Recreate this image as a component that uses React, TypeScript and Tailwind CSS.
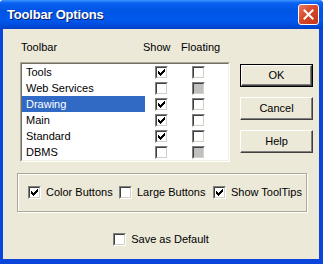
import React from "react";

const font = "font-['Liberation_Sans',Arial,sans-serif]";

function Check() {
  // classic 7x7 check mark, one column at a time
  const cols = [2, 3, 4, 3, 2, 1, 0];
  return (
    <svg width="7" height="7" viewBox="0 0 7 7" shapeRendering="crispEdges" className="block">
      {cols.map((y, x) => (
        <rect key={x} x={x} y={y} width="1" height="3" fill="#000" />
      ))}
    </svg>
  );
}

function CheckBox({ checked, disabled }: { checked?: boolean; disabled?: boolean }) {
  return (
    <span className="block w-[13px] h-[13px] shrink-0 border border-t-[#808080] border-l-[#808080] border-r-white border-b-white">
      <span
        className={`flex w-[11px] h-[11px] items-center justify-center border border-t-[#404040] border-l-[#404040] border-r-[#d4d0c8] border-b-[#d4d0c8] ${
          disabled ? "bg-[#c0c0c0]" : "bg-white"
        }`}
      >
        {checked && <Check />}
      </span>
    </span>
  );
}

function Button({ label, isDefault }: { label: string; isDefault?: boolean }) {
  return (
    <div
      className={`w-[73px] h-[23px] ${isDefault ? "border border-black" : ""}`}
    >
      <div className="h-full border border-t-white border-l-white border-r-[#404040] border-b-[#404040] bg-[#ece9d8] shadow-[inset_-1px_-1px_0_#808080] flex items-center justify-center text-[11px] text-black">
        {label}
      </div>
    </div>
  );
}

const toolbars = [
  { name: "Tools", show: true, floatDisabled: false },
  { name: "Web Services", show: false, floatDisabled: true },
  { name: "Drawing", show: true, floatDisabled: false, selected: true },
  { name: "Main", show: true, floatDisabled: false },
  { name: "Standard", show: true, floatDisabled: false },
  { name: "DBMS", show: false, floatDisabled: true },
];

export default function App() {
  return (
    <div className={`w-[323px] h-[264px] flex flex-col ${font} text-[11px] text-black overflow-hidden`}>
      {/* title bar */}
      <div className="h-[29px] shrink-0 flex items-center pl-[7px] pr-[4px] rounded-t-[3px] bg-[linear-gradient(to_bottom,#3d94ff_0%,#0a62f2_10%,#0055e5_35%,#0058ec_70%,#004ad8_90%,#003fc4_100%)]">
        <span className="text-white font-bold text-[13px] [text-shadow:1px_1px_0_#0a1e6a] tracking-[-0.2px]">
          Toolbar Options
        </span>
        <div className="ml-auto w-[21px] h-[21px] rounded-[3px] border border-white bg-[linear-gradient(135deg,#e8795a_0%,#d9482a_45%,#c2351a_100%)] flex items-center justify-center">
          <svg width="11" height="11" viewBox="0 0 11 11">
            <path d="M1.5 1.5 L9.5 9.5 M9.5 1.5 L1.5 9.5" stroke="#fff" strokeWidth="2" strokeLinecap="square" />
          </svg>
        </div>
      </div>

      {/* frame + body */}
      <div className="flex-1 flex bg-[#0a45dc] pl-[3px] pr-[4px] pb-[5px]">
        <div className="flex-1 bg-[#ece9d8] flex flex-col">
          <div className="flex pl-[17px] pt-[12px]">
            <div className="w-[210px]">
              <div className="flex h-[13px] leading-[13px]">
                <span className="w-[123px] pl-px">Toolbar</span>
                <span className="w-[38px]">Show</span>
                <span>Floating</span>
              </div>
              <div className="mt-[8px] h-[100px] border border-t-[#aca899] border-l-[#aca899] border-r-white border-b-white">
                <div className="h-full border border-t-[#716f64] border-l-[#716f64] border-r-[#f1efe2] border-b-[#f1efe2] bg-white">
                  {toolbars.map((t) => (
                    <div key={t.name} className="flex items-center h-[16px]">
                      <span
                        className={`w-[123px] h-full pl-[4px] leading-[16px] ${
                          t.selected ? "bg-[#316ac5] text-white" : ""
                        }`}
                      >
                        {t.name}
                      </span>
                      <span className="ml-[10px]">
                        <CheckBox checked={t.show} />
                      </span>
                      <span className="ml-[24px]">
                        <CheckBox disabled={t.floatDisabled} />
                      </span>
                    </div>
                  ))}
                </div>
              </div>
            </div>
            <div className="ml-[10px] mt-[23px] flex flex-col gap-[10px]">
              <Button label="OK" isDefault />
              <Button label="Cancel" />
              <Button label="Help" />
            </div>
          </div>

          {/* option group */}
          <div className="mt-[11px] ml-[14px] w-[290px] h-[39px] border border-[#aca899] shadow-[inset_1px_1px_0_#fff,1px_1px_0_#fff] flex items-center pl-[10px]">
            <label className="w-[91px] flex items-center gap-[5px]">
              <CheckBox checked />
              <span>Color Buttons</span>
            </label>
            <label className="w-[94px] flex items-center gap-[5px]">
              <CheckBox />
              <span>Large Buttons</span>
            </label>
            <label className="flex items-center gap-[5px]">
              <CheckBox checked />
              <span>Show ToolTips</span>
            </label>
          </div>

          <div className="mt-[21px] flex justify-center">
            <label className="flex items-center gap-[5px] h-[13px]">
              <CheckBox />
              <span>Save as Default</span>
            </label>
          </div>
        </div>
      </div>
    </div>
  );
}
